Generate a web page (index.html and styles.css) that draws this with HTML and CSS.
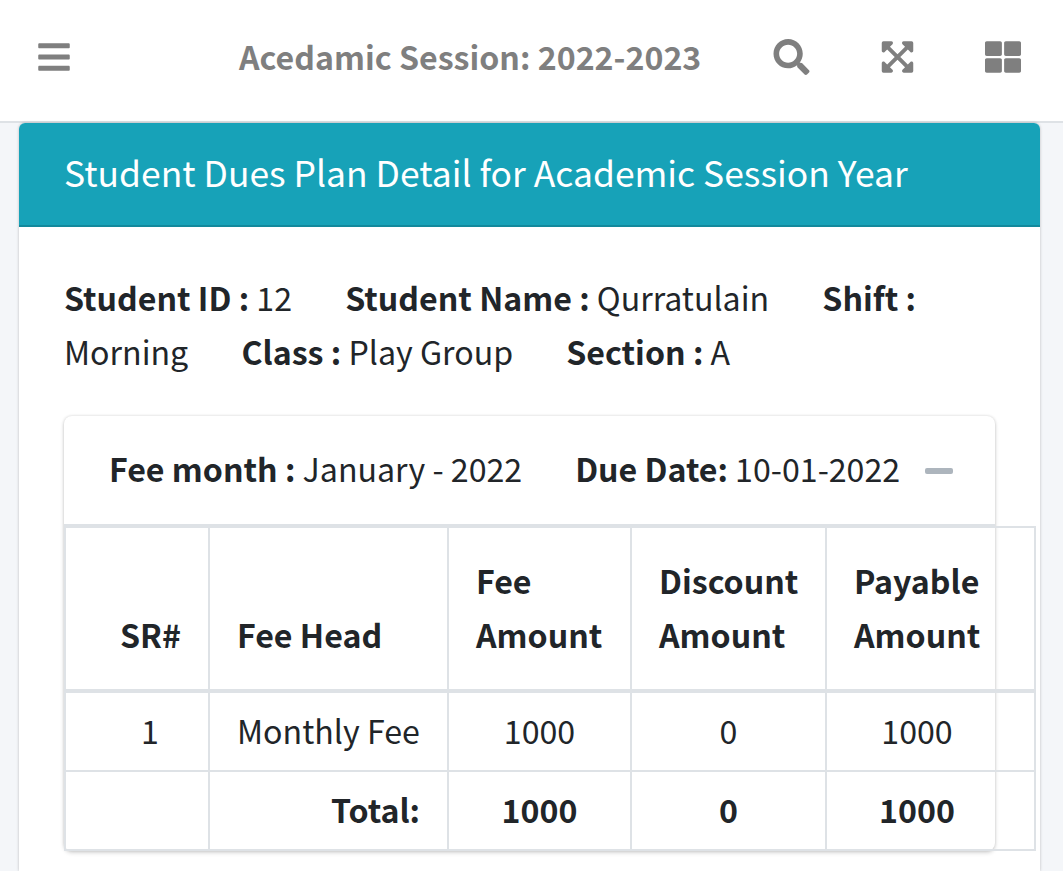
FILE: index.html
```html
<!DOCTYPE html>
<html lang="en">
<head>
    <meta charset="UTF-8">
    <meta name="viewport" content="width=device-width, initial-scale=1.0">
    <title>Student Dues Plan Detail</title>
    <link rel="stylesheet" href="styles.css">
</head>
<body>
    <nav class="navbar">
        <a class="nav-icon nav-bars" href="#">
            <svg viewBox="0 0 448 512"><path d="M16 132h416c8.837 0 16-7.163 16-16V76c0-8.837-7.163-16-16-16H16C7.163 60 0 67.163 0 76v40c0 8.837 7.163 16 16 16zm0 160h416c8.837 0 16-7.163 16-16v-40c0-8.837-7.163-16-16-16H16c-8.837 0-16 7.163-16 16v40c0 8.837 7.163 16 16 16zm0 160h416c8.837 0 16-7.163 16-16v-40c0-8.837-7.163-16-16-16H16c-8.837 0-16 7.163-16 16v40c0 8.837 7.163 16 16 16z"/></svg>
        </a>
        <div class="nav-title">Acedamic Session: 2022-2023</div>
        <a class="nav-icon nav-search" href="#">
            <svg viewBox="0 0 512 512"><path d="M505 442.7L405.3 343c-4.5-4.5-10.6-7-17-7H372c27.6-35.3 44-79.7 44-128C416 93.1 322.9 0 208 0S0 93.1 0 208s93.1 208 208 208c48.3 0 92.7-16.4 128-44v16.3c0 6.4 2.5 12.5 7 17l99.7 99.7c9.4 9.4 24.6 9.4 33.9 0l28.3-28.3c9.4-9.4 9.4-24.6.1-34zM208 336c-70.7 0-128-57.2-128-128 0-70.7 57.2-128 128-128 70.7 0 128 57.2 128 128 0 70.7-57.2 128-128 128z"/></svg>
        </a>
        <a class="nav-icon nav-expand" href="#">
            <svg viewBox="0 0 448 512"><path d="M448 344v112a23.94 23.94 0 0 1-24 24H312c-21.39 0-32.09-25.9-17-41l36.2-36.2L224 295.6 116.77 402.9 153 439c15.09 15.1 4.39 41-17 41H24a23.94 23.94 0 0 1-24-24V344c0-21.4 25.89-32.1 41-17l36.19 36.2L184.46 256 77.18 148.7 41 185c-15.1 15.1-41 4.4-41-17V56a23.94 23.94 0 0 1 24-24h112c21.39 0 32.09 25.9 17 41l-36.2 36.2L224 216.4l107.23-107.3L295 73c-15.09-15.1-4.39-41 17-41h112a23.94 23.94 0 0 1 24 24v112c0 21.4-25.89 32.1-41 17l-36.19-36.2L263.54 256l107.28 107.3L407 327.1c15.1-15.2 41-4.5 41 16.9z"/></svg>
        </a>
        <a class="nav-icon nav-grid" href="#">
            <svg viewBox="0 0 512 512"><path d="M296 32h192c13.255 0 24 10.745 24 24v160c0 13.255-10.745 24-24 24H296c-13.255 0-24-10.745-24-24V56c0-13.255 10.745-24 24-24zm-80 0H24C10.745 32 0 42.745 0 56v160c0 13.255 10.745 24 24 24h192c13.255 0 24-10.745 24-24V56c0-13.255-10.745-24-24-24zM0 296v160c0 13.255 10.745 24 24 24h192c13.255 0 24-10.745 24-24V296c0-13.255-10.745-24-24-24H24c-13.255 0-24 10.745-24 24zm296 184h192c13.255 0 24-10.745 24-24V296c0-13.255-10.745-24-24-24H296c-13.255 0-24 10.745-24 24v160c0 13.255 10.745 24 24 24z"/></svg>
        </a>
    </nav>

    <div class="content">
        <div class="card">
            <div class="card-header">Student Dues Plan Detail for Academic Session Year</div>
            <div class="card-body">
                <p class="student-info">
                    <span class="info-item"><b>Student ID :</b> 12</span>
                    <span class="info-item"><b>Student Name :</b> Qurratulain</span>
                    <span class="info-item"><b>Shift :</b> Morning</span>
                    <span class="info-item"><b>Class :</b> Play Group</span>
                    <span class="info-item"><b>Section :</b> A</span>
                </p>

                <div class="fee-card">
                    <div class="fee-header">
                        <span class="fee-month"><b>Fee month :</b> January - 2022</span>
                        <span class="fee-due"><b>Due Date:</b> 10-01-2022</span>
                        <span class="collapse-btn"></span>
                    </div>
                    <table class="fee-table">
                        <colgroup>
                            <col class="col-sr">
                            <col class="col-head">
                            <col class="col-fee">
                            <col class="col-discount">
                            <col class="col-payable">
                        </colgroup>
                        <thead>
                            <tr>
                                <th class="sr">SR#</th>
                                <th>Fee Head</th>
                                <th>Fee Amount</th>
                                <th>Discount Amount</th>
                                <th class="payable">Payable Amount</th>
                            </tr>
                        </thead>
                        <tbody>
                            <tr>
                                <td class="sr">1</td>
                                <td>Monthly Fee</td>
                                <td class="num">1000</td>
                                <td class="num">0</td>
                                <td class="num payable">1000</td>
                            </tr>
                            <tr class="total-row">
                                <td class="sr"></td>
                                <td class="total-label">Total:</td>
                                <td class="num">1000</td>
                                <td class="num">0</td>
                                <td class="num payable">1000</td>
                            </tr>
                        </tbody>
                    </table>
                </div>
            </div>
        </div>
    </div>
</body>
</html>
```

FILE: styles.css
```css
* {
    box-sizing: border-box;
}

body {
    margin: 0;
    background: #f4f6f9;
    color: #212529;
    font-family: "Noto Sans CJK SC", "Noto Sans", sans-serif;
    font-size: 32.15px;
    line-height: 54px;
    overflow: hidden;
}

.navbar {
    display: flex;
    align-items: center;
    height: 123px;
    padding: 0 42px 9px 38px;
    background: #fff;
    border-bottom: 2px solid #dee2e6;
}

.nav-icon {
    display: block;
    flex: none;
    height: 36px;
    margin-top: 1px;
}

.nav-icon svg {
    display: block;
    height: 36px;
    fill: #7f7f7f;
}

.nav-title {
    flex: none;
    margin-left: 169px;
    color: #7f7f7f;
    font-weight: 700;
    white-space: nowrap;
}

.nav-search {
    margin-left: 72px;
}

.nav-expand {
    margin-left: 71px;
}

.nav-grid {
    margin-left: 71px;
}

.nav-bars svg { width: 32px; }
.nav-search svg { width: 37px; }
.nav-expand svg { width: 33px; }
.nav-grid svg { width: 36px; }

.content {
    padding: 0 23px 0 19px;
}

.card {
    background: #fff;
    border-radius: 6px 6px 0 0;
    box-shadow: 0 0 3px rgba(0,0,0,0.25);
    height: 748px;
}

.card-header {
    height: 104px;
    padding: 22px 45px 0;
    background: #17a2b8;
    color: #fff;
    border-bottom: 2px solid #12899c;
    border-radius: 6px 6px 0 0;
    font-size: 35.45px;
}

.card-body {
    padding: 43px 45px 0;
}

.student-info {
    margin: 0 0 38px;
}

.info-item {
    margin-right: 46px;
}

.fee-card {
    background: #fff;
    border-radius: 8px;
    box-shadow: 0 0 3px rgba(0,0,0,0.15), 0 2px 4px rgba(0,0,0,0.15);
}

.fee-header {
    display: flex;
    align-items: center;
    height: 111px;
    padding: 0 42px 4px 45px;
    border-bottom: 3px solid #dee2e6;
    white-space: nowrap;
}

.fee-due {
    margin-left: 53px;
}

.collapse-btn {
    flex: none;
    width: 28px;
    height: 6px;
    margin: 5px 0 0 25px;
    background: #adb5bd;
    border-radius: 2px;
}

.fee-table {
    width: 970px;
    table-layout: fixed;
    border-collapse: collapse;
    margin-top: -1px;
}

.col-sr { width: 144px; }
.col-head { width: 239px; }
.col-fee { width: 183px; }
.col-discount { width: 195px; }
.col-payable { width: 209px; }

.fee-table th,
.fee-table td {
    border: 2px solid #dee2e6;
    padding: 10px 28px 13px 27px;
    text-align: left;
    font-weight: 400;
    white-space: nowrap;
}

.fee-table th {
    font-weight: 700;
    white-space: normal;
    vertical-align: bottom;
    padding: 25px 28px 28px 27px;
    border-bottom-width: 4px;
}

.fee-table .sr {
    padding-left: 54px;
    text-align: center;
}

.fee-table .num {
    padding-left: 28px;
    text-align: center;
}

.fee-table .payable {
    padding-right: 55px;
}

.fee-table th.payable {
    text-align: center;
}

.total-row td {
    font-weight: 700;
}

.fee-table .total-label {
    padding-right: 27px;
    text-align: right;
}
```
